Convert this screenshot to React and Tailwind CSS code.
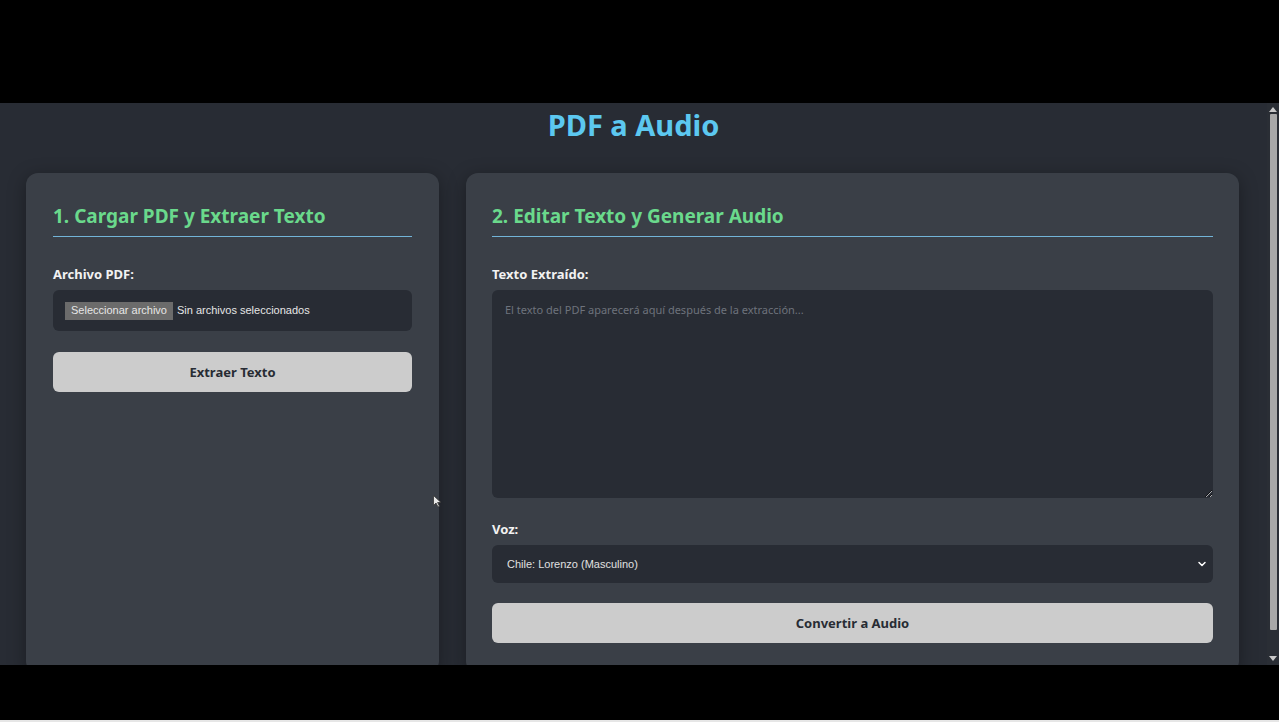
import { ChevronDown } from 'lucide-react'

const ui = { fontFamily: '"Segoe UI", "Noto Sans", "Open Sans", sans-serif' }
const arial = { fontFamily: '"Liberation Sans", Arial, sans-serif' }

function SectionTitle({ children }) {
  return (
    <h2
      className="text-[19px] font-bold text-[#6ad98c] border-b border-[#72b4d8] pb-[7px] leading-[26px]"
      style={ui}
    >
      {children}
    </h2>
  )
}

function Label({ children }) {
  return (
    <p className="text-[13px] font-bold text-[#f2f2f2] mb-[7px] leading-[18px]" style={ui}>
      {children}
    </p>
  )
}

function ActionButton({ children }) {
  return (
    <button
      className="w-full h-[40px] rounded-[6px] bg-[#cccccc] text-[#282c34] text-[13px] font-bold pt-[2px]"
      style={ui}
    >
      {children}
    </button>
  )
}

function Scrollbar() {
  return (
    <div className="w-[12px] h-full bg-[#2a2e35] flex flex-col items-center py-[2px]">
      <div className="w-0 h-0 border-l-[4px] border-r-[4px] border-b-[5px] border-l-transparent border-r-transparent border-b-[#c8c8c8] mt-[2px]" />
      <div className="w-[7px] flex-1 my-[2px] flex flex-col">
        <div className="h-[516px] bg-[#a8a8a8] rounded-[1px]" />
      </div>
      <div className="w-0 h-0 border-l-[4px] border-r-[4px] border-t-[5px] border-l-transparent border-r-transparent border-t-[#c8c8c8] mb-[2px]" />
    </div>
  )
}

export default function App() {
  return (
    <div className="w-[1279px] h-[722px] bg-black overflow-hidden flex flex-col">
      <div className="h-[103px] bg-black" />

      <div className="h-[562px] flex relative">
        <div className="flex-1 bg-[#282c34] overflow-hidden">
          <h1
            className="text-center text-[29px] font-bold text-[#5cc8f0] leading-[44px] h-[44px]"
            style={ui}
          >
            PDF a Audio
          </h1>

          <div className="flex gap-[27px] pl-[26px] pr-[28px] mt-[26px] h-[500px]">
            {/* Left card */}
            <div className="w-[413px] bg-[#3a3f47] rounded-[12px] shadow-[0_4px_18px_rgba(0,0,0,0.35)] px-[27px] pt-[30px]">
              <SectionTitle>1. Cargar PDF y Extraer Texto</SectionTitle>

              <div className="mt-[28px]">
                <Label>Archivo PDF:</Label>
                <div className="h-[41px] rounded-[6px] bg-[#282c34] flex items-center px-[12px] gap-[4px]" style={arial}>
                  <span className="bg-[#6b6b6b] text-[#e6e6e6] text-[11px] px-[6px] h-[18px] flex items-center">
                    Seleccionar archivo
                  </span>
                  <span className="text-[#e6e6e6] text-[11px]">Sin archivos seleccionados</span>
                </div>
              </div>

              <div className="mt-[21px]">
                <ActionButton>Extraer Texto</ActionButton>
              </div>
            </div>

            {/* Right card */}
            <div className="flex-1 bg-[#3a3f47] rounded-[12px] shadow-[0_4px_18px_rgba(0,0,0,0.35)] px-[26px] pt-[30px]">
              <SectionTitle>2. Editar Texto y Generar Audio</SectionTitle>

              <div className="mt-[28px]">
                <Label>Texto Extraído:</Label>
                <textarea
                  className="w-full h-[208px] block rounded-[6px] bg-[#282c34] text-[#e6e6e6] text-[11px] px-[13px] py-[12px] outline-none placeholder:text-[#6e737c]"
                  style={ui}
                  placeholder="El texto del PDF aparecerá aquí después de la extracción..."
                />
              </div>

              <div className="mt-[22px]">
                <Label>Voz:</Label>
                <div className="relative">
                  <select
                    className="w-full h-[38px] appearance-none rounded-[6px] bg-[#282c34] text-[#e0e0e0] text-[11px] px-[15px] outline-none"
                    style={arial}
                    defaultValue="lorenzo"
                  >
                    <option value="lorenzo">Chile: Lorenzo (Masculino)</option>
                  </select>
                  <ChevronDown
                    className="absolute right-[5px] top-1/2 -translate-y-1/2 w-[12px] h-[12px] text-white pointer-events-none"
                    strokeWidth={3}
                  />
                </div>
              </div>

              <div className="mt-[20px]">
                <ActionButton>Convertir a Audio</ActionButton>
              </div>
            </div>
          </div>
        </div>

        <Scrollbar />

        {/* mouse cursor */}
        <svg className="absolute left-[433px] top-[392px] pointer-events-none" width="9" height="13" viewBox="0 0 9 13">
          <path d="M0.5 0.5 L0.5 10.5 L3 8 L5 12 L6.5 11.3 L4.6 7.5 L8 7.5 Z" fill="#e8e8e8" stroke="#333" strokeWidth="0.8" />
        </svg>
      </div>

      <div className="h-[55px] bg-black" />
      <div className="h-[2px] bg-[#e6e6e6]" />
    </div>
  )
}
